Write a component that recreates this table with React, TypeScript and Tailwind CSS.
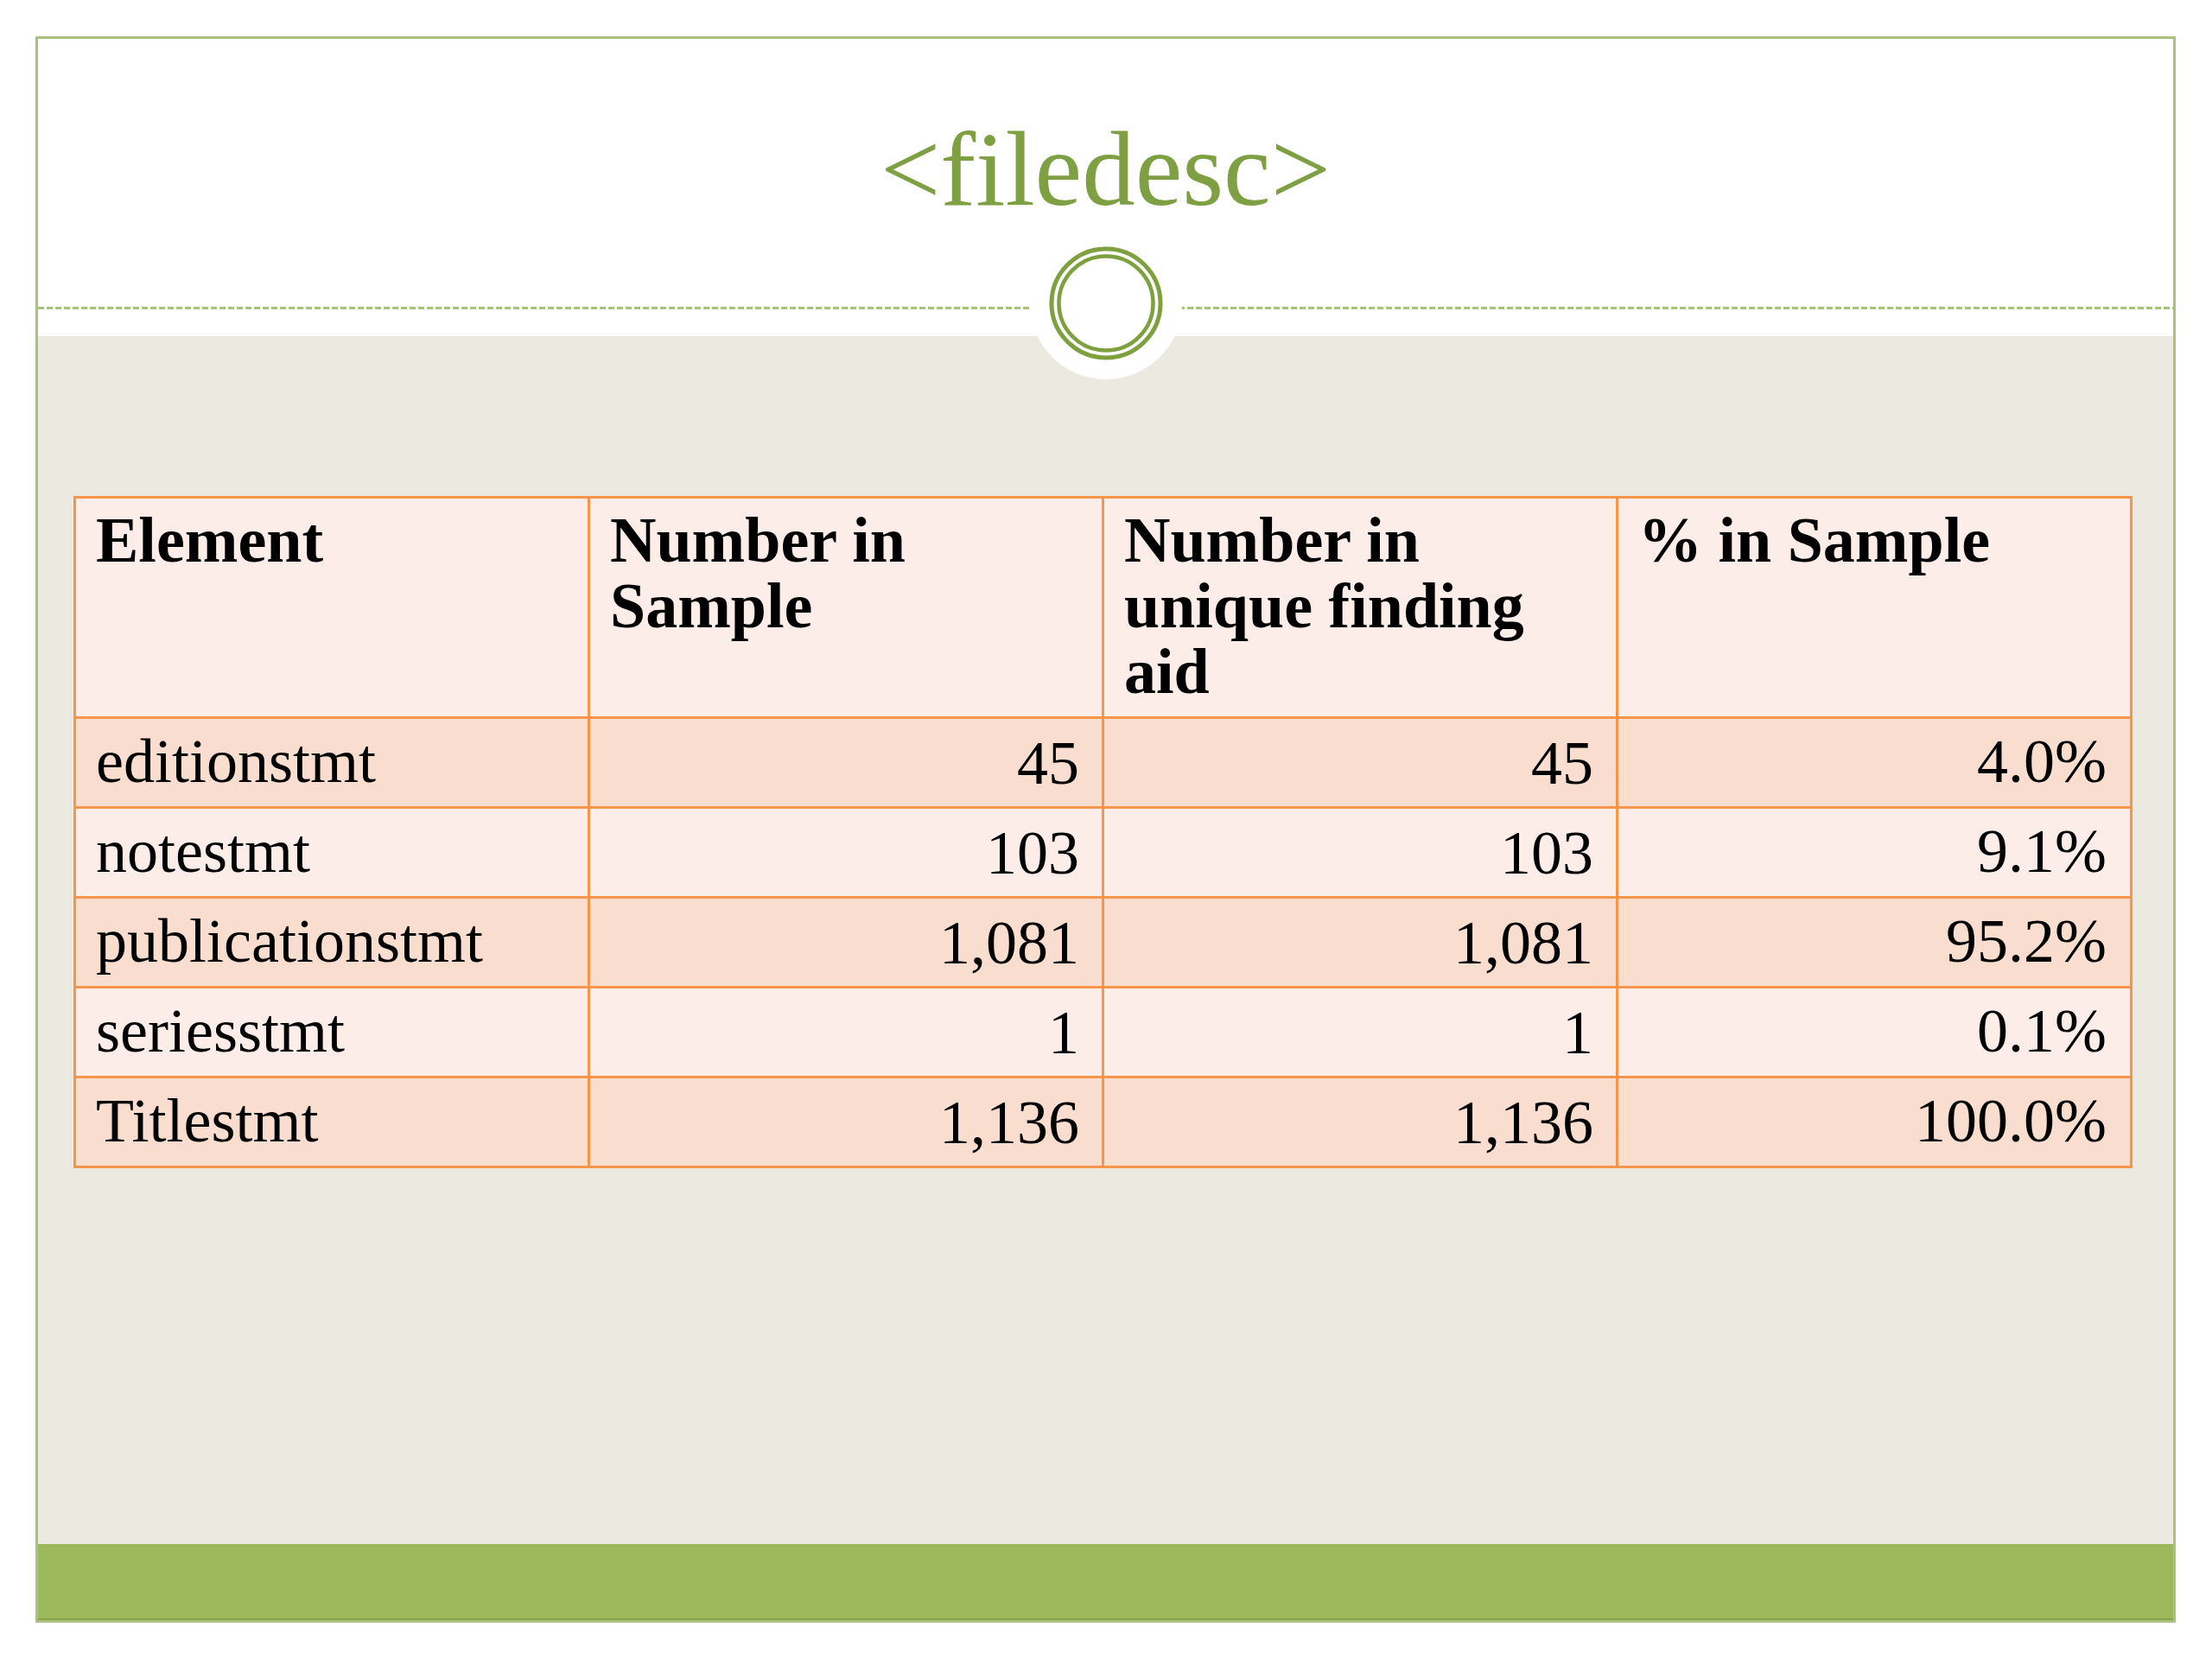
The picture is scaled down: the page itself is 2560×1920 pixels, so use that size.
import React from "react";

const rows: [string, string, string, string][] = [
  ["editionstmt", "45", "45", "4.0%"],
  ["notestmt", "103", "103", "9.1%"],
  ["publicationstmt", "1,081", "1,081", "95.2%"],
  ["seriesstmt", "1", "1", "0.1%"],
  ["Titlestmt", "1,136", "1,136", "100.0%"],
];

function Seal() {
  return (
    <svg width="180" height="180" viewBox="0 0 180 180" className="block">
      <circle cx="90" cy="90" r="88" fill="#ffffff" />
      <circle cx="90" cy="90" r="63" fill="none" stroke="#7ea03e" strokeWidth="5" />
      <circle cx="90" cy="90" r="54.5" fill="none" stroke="#7ea03e" strokeWidth="4.5" />
    </svg>
  );
}

const th =
  "border-[3px] border-[#f7964a] pt-[10px] pb-[14px] pl-[23px] pr-[26px] text-left align-top text-[74px] leading-[76px] font-bold";

export default function App() {
  return (
    <div className="w-[2560px] h-[1920px] bg-white pt-[42px] pl-[41px] font-['Liberation_Serif',serif]">
      <div className="w-[2477px] h-[1836px] border-[3px] border-[#a9c27f] flex flex-col">
        <header className="relative h-[344px] bg-white shrink-0">
          <h1 className="pt-[89px] text-center text-[123px] leading-[123px] text-[#7ea042] font-normal">
            &lt;filedesc&gt;
          </h1>
          <div className="absolute left-0 right-0 top-[310px] h-[3px] bg-[repeating-linear-gradient(90deg,#a8c27e_0px,#a8c27e_7px,transparent_7px,transparent_10px)]" />
          <div className="absolute left-[1146px] top-[216px] z-10">
            <Seal />
          </div>
        </header>
        <main className="flex-1 bg-[#eceae0] pt-[185px] pl-[41px]">
          <table className="table-fixed border-collapse w-[2383px] text-black">
            <colgroup>
              <col className="w-1/4" />
              <col className="w-1/4" />
              <col className="w-1/4" />
              <col className="w-1/4" />
            </colgroup>
            <thead>
              <tr className="bg-[#fcede8]">
                <th className={th}>Element</th>
                <th className={th}>
                  Number in
                  <br />
                  Sample
                </th>
                <th className={th}>
                  Number in
                  <br />
                  unique finding
                  <br />
                  aid
                </th>
                <th className={th}>% in Sample</th>
              </tr>
            </thead>
            <tbody>
              {rows.map((r, i) => (
                <tr key={r[0]} className={i % 2 === 0 ? "bg-[#f9ddcf]" : "bg-[#fcede8]"}>
                  <td className="border-[3px] border-[#f7964a] pt-[11px] pb-[14px] pl-[23px] pr-[26px] text-left align-top text-[72px] leading-[76px]">
                    {r[0]}
                  </td>
                  <td className="border-[3px] border-[#f7964a] pt-[13px] pb-[12px] pl-[23px] pr-[26px] text-right align-top text-[72px] leading-[76px]">
                    {r[1]}
                  </td>
                  <td className="border-[3px] border-[#f7964a] pt-[13px] pb-[12px] pl-[23px] pr-[26px] text-right align-top text-[72px] leading-[76px]">
                    {r[2]}
                  </td>
                  <td className="border-[3px] border-[#f7964a] pt-[11px] pb-[14px] pl-[23px] pr-[27px] text-right align-top text-[72px] leading-[76px]">
                    {r[3]}
                  </td>
                </tr>
              ))}
            </tbody>
          </table>
        </main>
        <footer className="h-[88px] shrink-0 bg-[#9bb95a] border-b-[2px] border-[#86a34a]" />
      </div>
    </div>
  );
}
